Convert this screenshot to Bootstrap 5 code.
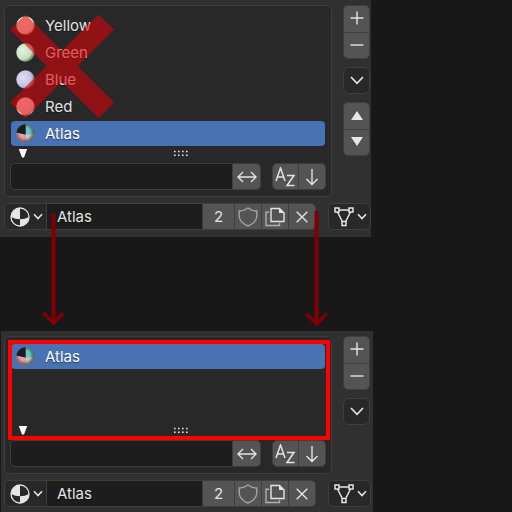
<!DOCTYPE html>
<html lang="en">
<head>
<meta charset="utf-8">
<title>Material slots</title>
<link href="https://cdn.jsdelivr.net/npm/bootstrap@5.3.0/dist/css/bootstrap.min.css" rel="stylesheet">
<style>
html,body{height:512px;overflow:hidden}
body{background:#181818;color:#e4e4e4;font:15px/27px Inter,"Liberation Sans",sans-serif}
.stage{width:512px;height:512px}
.props{background:#303030;width:371px;height:237px;padding:5px 1px 0 4px}
.props.after{width:372px;height:181px;margin:94px 0 0 1px;padding-left:3px}
.listbox{width:328px;height:192px;border:1px solid #3e3e3e;border-radius:5px;background:#282828;padding:6px 5px 6px 5px}
.after .listbox{height:138px}
.slot{height:27px;padding:1px 0;line-height:25px}
.slot-in{height:25px;width:314px;margin-left:1px;border-radius:4px;padding-left:5px;text-shadow:0 1px 1px #0008}
.slot-in svg{margin-right:9px}
.active-slot{background:#4772b3;color:#fff}
.grip{height:16px}
.grip svg{display:block}
.cell{height:27px;border:1px solid #3e3e3e;background:#545454;display:flex;align-items:center;justify-content:center;flex:none}
.cell svg{display:block;overflow:visible}
.cell+.cell{border-left-width:0}
.dark{background:#1d1d1d}
.mid{background:#282828}
.rl{border-top-left-radius:5px;border-bottom-left-radius:5px}
.rr{border-top-right-radius:5px;border-bottom-right-radius:5px}
.side{width:27px;margin-left:11px}
.side .cell{width:27px}
.side .cell+.cell{border-left-width:1px}
.side .rt{border-top-left-radius:5px;border-top-right-radius:5px;border-bottom:0;padding-bottom:2px}
.side .rb{border-bottom-left-radius:5px;border-bottom-right-radius:5px;padding-bottom:2px}
.idrow{margin-top:6px}
.drop{width:43px;gap:3px;padding-left:2px}
.name{width:156px;justify-content:flex-start;padding-left:10px;text-shadow:0 1px 1px #0008}
.marks{left:0;top:0;pointer-events:none}
.ic{fill:none;stroke:#e4e4e4;stroke-width:1.4}
</style>
<script src="https://cdn.jsdelivr.net/npm/bootstrap@5.3.0/dist/js/bootstrap.bundle.min.js"></script>
</head>
<body>
<svg width="0" height="0" class="position-absolute">
<defs>
<radialGradient id="gy" cx=".4" cy=".4" r=".7"><stop offset="0" stop-color="#fffff0"/><stop offset=".7" stop-color="#fff2d8"/><stop offset="1" stop-color="#77705a"/></radialGradient>
<radialGradient id="gr" cx=".4" cy=".4" r=".7"><stop offset="0" stop-color="#fff6f6"/><stop offset=".7" stop-color="#ffe4e8"/><stop offset="1" stop-color="#775a5c"/></radialGradient>
<radialGradient id="gg" cx=".35" cy=".4" r=".72"><stop offset="0" stop-color="#e2f5df"/><stop offset=".65" stop-color="#c3dfc0"/><stop offset="1" stop-color="#40523e"/></radialGradient>
<radialGradient id="gb" cx=".35" cy=".4" r=".72"><stop offset="0" stop-color="#e0dff8"/><stop offset=".65" stop-color="#c4c2e2"/><stop offset="1" stop-color="#484765"/></radialGradient>
<radialGradient id="shade" cx=".45" cy=".45" r=".58"><stop offset=".5" stop-color="#222" stop-opacity="0"/><stop offset="1" stop-color="#222" stop-opacity=".75"/></radialGradient>
<symbol id="atlas" viewBox="0 0 19 19"><path d="M9.500 9.500V.5A9 9 0 0 0 .5 8.500Z" fill="#191b1e"/><path d="M9.500 10.500V.5A9 9 0 0 1 18.500 9.500Z" fill="#69c7bd"/><path d="M9.500 10.500V18.500A9 9 0 0 1 .5 8.500Z" fill="#f09a9b"/><path d="M9.500 10.500 18.500 9.500A9 9 0 0 1 9.500 18.500Z" fill="#c9c9cb"/><path d="M.5 8.500 9.500 10.500V.5A9 9 0 0 0 .5 8.500Z" fill="#191b1e"/><circle cx="9.500" cy="9.500" r="9" fill="url(#shade)"/></symbol>
<symbol id="mat" viewBox="0 0 20 20"><circle cx="10" cy="10" r="9" fill="#282828" stroke="#e6e6e6" stroke-width="1.300"/><path d="M10 1A9 9 0 0 0 1 10Q5 12.200 10 12.200ZM10 12.200Q15 12.200 19 10A9 9 0 0 1 10 19Z" fill="#e6e6e6"/></symbol>
<symbol id="chev" viewBox="0 0 10 7"><path class="ic" style="stroke-width:1.600" d="M1 1.200 5 5.500 9 1.200"/></symbol>
<symbol id="bigchev" viewBox="0 0 14 9"><path class="ic" style="stroke-width:1.700" d="M1 1 7 7.300 13 1"/></symbol>
<symbol id="plus" viewBox="0 0 14 14"><path class="ic" d="M7 .5V13.500M.5 7H13.500"/></symbol>
<symbol id="minus" viewBox="0 0 14 14"><path class="ic" d="M.5 7H13.500"/></symbol>
<symbol id="swap" viewBox="0 0 20 12"><path class="ic" d="M1 6H19M6 1 1 6 6 11M14 1 19 6 14 11"/></symbol>
<symbol id="az" viewBox="0 0 21 20"><path class="ic" style="stroke-width:1.500" d="M1 14 5.500 1 10 14M2.500 10H8.500M12 8.500H19L12 18.500H19.500"/></symbol>
<symbol id="down" viewBox="0 0 14 18"><path class="ic" d="M7 1V16.500M1.500 11 7 16.500 12.500 11"/></symbol>
<symbol id="shield" viewBox="0 0 20 20"><path class="ic" style="stroke:#a4a4a4" d="M10 1Q6 4 1.200 4V9Q1.500 15.500 10 19Q18.500 15.500 18.800 9V4Q14 4 10 1Z"/></symbol>
<symbol id="copy" viewBox="0 0 20 20"><path class="ic" style="stroke:#b0b0b0" d="M4 5.200H1V18.500H14.500V16"/><path class="ic" d="M6 1.500H14.500L19 6V14.500H6Z"/><path d="M14 1V6H19.500Z" fill="#e6e6e6"/></symbol>
<symbol id="close" viewBox="0 0 12 12"><path class="ic" d="M.7.700 11.300 11.300M11.300.700.700 11.300"/></symbol>
<symbol id="mesh" viewBox="0 0 20 20"><path class="ic" style="stroke-width:1.500" d="M5 3H15M3.500 5 8.300 14.500M16.500 5 11.700 14.500M1 1H5V5H1ZM15 1H19V5H15ZM8 14.500H12V18.500H8Z"/></symbol>
<symbol id="dots" viewBox="0 0 16 6"><path d="M1 1.500H15M1 5.200H15" stroke="#e6e6e6" stroke-width="1.500" stroke-dasharray="1.600 2.400"/></symbol>
</defs>
</svg>

<main class="stage position-relative">
<section class="props">
  <div class="d-flex">
    <div class="listbox">
      <div class="slot"><div class="slot-in d-flex align-items-center"><svg width="20" height="19"><circle cx="9.500" cy="9.500" r="9.200" fill="url(#gy)"/></svg>Yellow</div></div>
      <div class="slot"><div class="slot-in d-flex align-items-center"><svg width="20" height="19"><circle cx="9.500" cy="9.500" r="9.200" fill="url(#gg)"/></svg>Green</div></div>
      <div class="slot"><div class="slot-in d-flex align-items-center"><svg width="20" height="19"><circle cx="9.500" cy="9.500" r="9.200" fill="url(#gb)"/></svg>Blue</div></div>
      <div class="slot"><div class="slot-in d-flex align-items-center"><svg width="20" height="19"><circle cx="9.500" cy="9.500" r="9.200" fill="url(#gr)"/></svg>Red</div></div>
      <div class="slot"><div class="slot-in active-slot d-flex align-items-center"><svg width="20" height="19"><use href="#atlas" width="19" height="19"/></svg>Atlas</div></div>
      <div class="grip"><svg width="314" height="14"><path d="M8.800 2H17.200L14 10.500H12Z" fill="#fff"/><use href="#dots" x="163" y="3" width="16" height="6"/></svg></div>
      <div class="d-flex">
        <div class="cell dark rl" style="width:223px"></div><div class="cell rr" style="width:28px"><svg width="20" height="12"><use href="#swap"/></svg></div>
        <div class="cell rl ms-auto" style="width:27px;border-left-width:1px"><svg width="21" height="20"><use href="#az"/></svg></div><div class="cell rr" style="width:27px"><svg width="14" height="18"><use href="#down"/></svg></div>
      </div>
    </div>
    <div class="side">
      <div class="cell rt"><svg width="14" height="14"><use href="#plus"/></svg></div><div class="cell rb"><svg width="14" height="14"><use href="#minus"/></svg></div>
      <div class="cell mid rounded-2 mt-2"><svg width="14" height="9"><use href="#bigchev"/></svg></div>
      <div class="cell rt mt-2"><svg width="12" height="9"><path d="M6 0 12 9H0Z" fill="#e6e6e6"/></svg></div><div class="cell rb"><svg width="12" height="9"><path d="M0 0H12L6 9Z" fill="#e6e6e6"/></svg></div>
    </div>
  </div>
  <div class="idrow d-flex">
    <div class="cell mid rl drop"><svg width="20" height="20"><use href="#mat"/></svg><svg width="10" height="7"><use href="#chev"/></svg></div><div class="cell dark name">Atlas</div><div class="cell" style="width:32px">2</div><div class="cell" style="width:27px"><svg width="20" height="20"><use href="#shield"/></svg></div><div class="cell" style="width:27px"><svg width="20" height="20"><use href="#copy"/></svg></div><div class="cell rr" style="width:27px"><svg width="12" height="12"><use href="#close"/></svg></div>
    <div class="cell mid rl rr drop" style="margin-left:12px;border-left-width:1px"><svg width="20" height="20"><use href="#mesh"/></svg><svg width="10" height="7"><use href="#chev"/></svg></div>
  </div>
</section>

<section class="props after">
  <div class="d-flex">
    <div class="listbox">
      <div class="slot"><div class="slot-in active-slot d-flex align-items-center"><svg width="20" height="19"><use href="#atlas" width="19" height="19"/></svg>Atlas</div></div>
      <div class="slot"></div>
      <div class="slot"></div>
      <div class="grip"><svg width="314" height="14"><path d="M8.800 2H17.200L14 10.500H12Z" fill="#fff"/><use href="#dots" x="163" y="3" width="16" height="6"/></svg></div>
      <div class="d-flex">
        <div class="cell dark rl" style="width:223px"></div><div class="cell rr" style="width:28px"><svg width="20" height="12"><use href="#swap"/></svg></div>
        <div class="cell rl ms-auto" style="width:27px;border-left-width:1px"><svg width="21" height="20"><use href="#az"/></svg></div><div class="cell rr" style="width:27px"><svg width="14" height="18"><use href="#down"/></svg></div>
      </div>
    </div>
    <div class="side">
      <div class="cell rt"><svg width="14" height="14"><use href="#plus"/></svg></div><div class="cell rb"><svg width="14" height="14"><use href="#minus"/></svg></div>
      <div class="cell mid rounded-2 mt-2"><svg width="14" height="9"><use href="#bigchev"/></svg></div>
    </div>
  </div>
  <div class="idrow d-flex">
    <div class="cell mid rl drop"><svg width="20" height="20"><use href="#mat"/></svg><svg width="10" height="7"><use href="#chev"/></svg></div><div class="cell dark name">Atlas</div><div class="cell" style="width:32px">2</div><div class="cell" style="width:27px"><svg width="20" height="20"><use href="#shield"/></svg></div><div class="cell" style="width:27px"><svg width="20" height="20"><use href="#copy"/></svg></div><div class="cell rr" style="width:27px"><svg width="12" height="12"><use href="#close"/></svg></div>
    <div class="cell mid rl rr drop" style="margin-left:12px;border-left-width:1px"><svg width="20" height="20"><use href="#mesh"/></svg><svg width="10" height="7"><use href="#chev"/></svg></div>
  </div>
</section>

<svg class="marks position-absolute" width="512" height="512">
  <path d="M25.500 14.500 62 51 98.500 14.500 114 29.500 77.500 66 114 102.500 98.500 118 62 81.500 25.500 118 10 102.500 46.500 66 10 29.500Z" fill="#dc0406" fill-opacity=".59"/>
  <g fill="none" stroke="#800004"><path d="M53.500 213V322M316.500 211V323" stroke-width="4"/><path d="M43.500 313 53.500 323 63.500 313M306.500 314 316.500 324 326.500 314" stroke-width="3.500"/></g>
  <rect x="10" y="342" width="318" height="96" fill="none" stroke="#f00" stroke-width="4"/>
</svg>
</main>
</body>
</html>
